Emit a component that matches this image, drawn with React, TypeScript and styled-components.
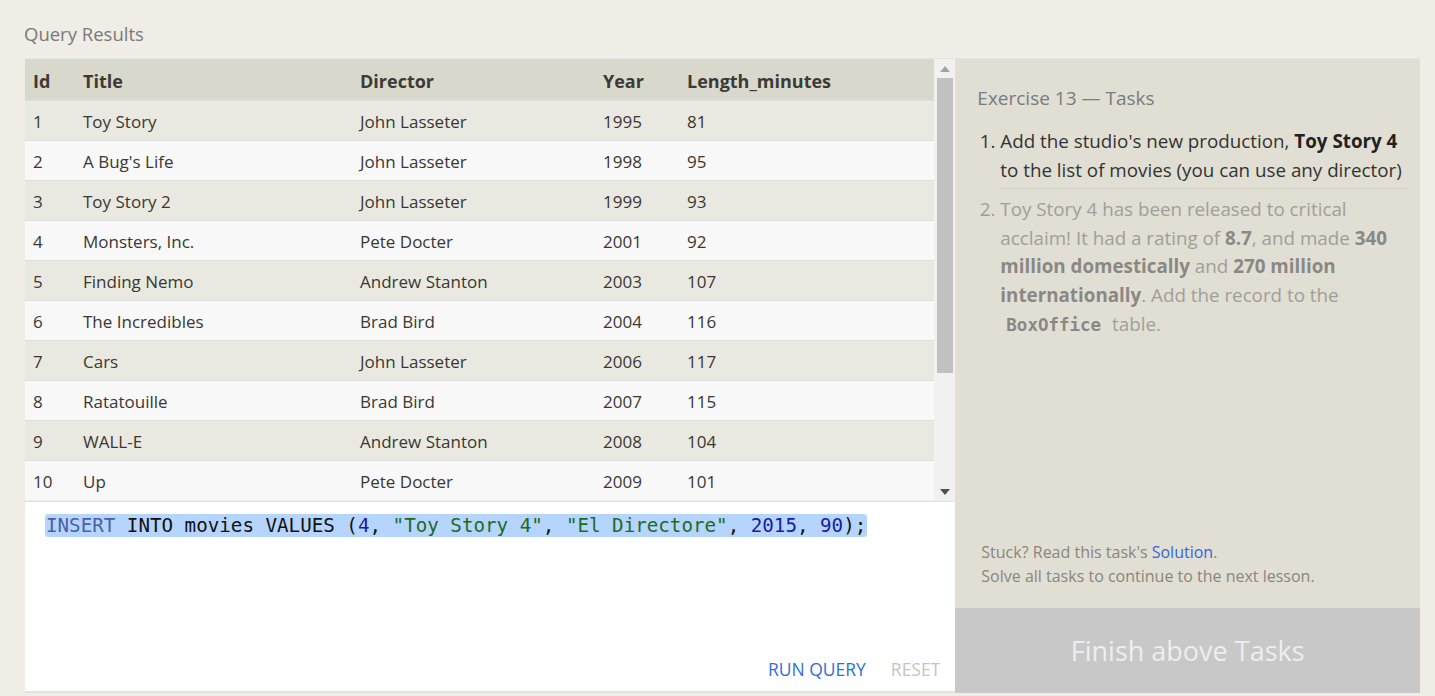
import React from "react";
import styled, { createGlobalStyle } from "styled-components";

const Global = createGlobalStyle`
  html, body { margin: 0; padding: 0; background: #efede5; }
  body { font-family: "Open Sans", "Noto Sans", sans-serif; }
  * { box-sizing: border-box; }
`;

const Page = styled.div`
  width: 1435px;
  height: 696px;
  padding: 22px 15px 0 24px;
  display: flex;
  flex-direction: column;
  overflow: hidden;
`;

const Heading = styled.div`
  font-size: 18.5px;
  color: #7a7a7a;
  line-height: 24px;
  height: 36px;
`;

const Main = styled.div`
  display: flex;
  height: 635px;
`;

const LeftCol = styled.div`
  width: 931px;
  margin-left: 1px;
  display: flex;
  flex-direction: column;
  border-top: 1px solid #e6e4dc;
`;

const TableArea = styled.div`
  height: 443px;
  display: flex;
  border-bottom: 1px solid #e0e0e0;
`;

const TableWrap = styled.div`
  flex: 1;
  overflow: hidden;
`;

const Table = styled.table`
  width: 100%;
  border-collapse: collapse;
  color: #333;
`;

const Th = styled.th<{ $w?: number }>`
  text-align: left;
  font-weight: 700;
  font-size: 18px;
  color: #3d3a36;
  background: #d9d8cc;
  height: 41px;
  padding: 3px 0 0 8px;
  width: ${(p) => (p.$w ? `${p.$w}px` : "auto")};
`;

const Tr = styled.tr<{ $odd: boolean }>`
  background: ${(p) => (p.$odd ? "#eae9e1" : "#f8f8f8")};
  border-top: 1px solid #dedede;
`;

const Td = styled.td`
  font-size: 17px;
  height: 40px;
  padding: 2px 0 0 8px;
  color: #3a3733;
`;

const Scrollbar = styled.div`
  width: 21px;
  background: #f1f1f1;
  display: flex;
  flex-direction: column;
  align-items: center;
`;

const ArrowBox = styled.div`
  height: 19px;
  width: 100%;
  display: flex;
  align-items: center;
  justify-content: center;
`;

const Thumb = styled.div`
  width: 16px;
  height: 295px;
  background: #c1c1c1;
`;

const TrackFill = styled.div`
  flex: 1;
`;

const Editor = styled.div`
  flex: 1;
  background: #ffffff;
  display: flex;
  flex-direction: column;
  padding: 13px 15px 10px 20px;
  border-bottom: 2px solid #e4e2da;
`;

const Code = styled.div`
  font-family: "DejaVu Sans Mono", "Liberation Mono", monospace;
  font-size: 19.2px;
  line-height: 22px;
  white-space: pre;
  flex: 1;
`;

const Sel = styled.span`
  background: #b5d5ff;
  border-radius: 3px;
  padding: 0 1px;
  color: #111;
`;

const Kw = styled.span`
  color: #4a5fa5;
`;
const Num = styled.span`
  color: #1a1aa6;
`;
const Str = styled.span`
  color: #1d6b1d;
`;

const Actions = styled.div`
  display: flex;
  justify-content: flex-end;
  gap: 25px;
  font-size: 17.5px;
  padding-top: 2px;
`;

const ActionBtn = styled.span<{ $muted?: boolean }>`
  color: ${(p) => (p.$muted ? "#c4c4c4" : "#2f6fd8")};
`;

const Right = styled.div`
  width: 465px;
  background: #e1dfd4;
  display: flex;
  flex-direction: column;
  border-top: 1px solid #e6e4dc;
`;

const TaskBody = styled.div`
  flex: 1;
  padding: 26px 12px 0 22px;
  display: flex;
  flex-direction: column;
`;

const TaskTitle = styled.div`
  font-size: 19px;
  color: #777b82;
  line-height: 26px;
  margin-bottom: 16px;
`;

const List = styled.ol`
  margin: 0;
  padding: 0 0 0 23px;
  font-size: 18.8px;
  line-height: 28.6px;
`;

const Item = styled.li<{ $done?: boolean }>`
  color: ${(p) => (p.$done ? "#333" : "#a09e98")};
  padding-bottom: ${(p) => (p.$done ? "4px" : "0")};
  margin-bottom: ${(p) => (p.$done ? "6px" : "0")};
  border-bottom: ${(p) => (p.$done ? "1px solid #d2d0c6" : "none")};
  & b {
    color: ${(p) => (p.$done ? "#222" : "#8a8884")};
  }
`;

const Mono = styled.code`
  font-family: "DejaVu Sans Mono", "Liberation Mono", monospace;
  font-weight: 700;
  font-size: 17.5px;
  color: #8a8884;
  padding: 0 6px;
`;

const Stuck = styled.div`
  margin-top: auto;
  padding: 0 0 20px 4px;
  font-size: 16px;
  line-height: 24px;
  color: #8a857d;
  & a {
    color: #3366e0;
    text-decoration: none;
  }
`;

const Finish = styled.div`
  height: 85px;
  background: #c8c8c8;
  color: #eeeeee;
  font-size: 27px;
  display: flex;
  align-items: center;
  justify-content: center;
`;

const rows: [number, string, string, number, number][] = [
  [1, "Toy Story", "John Lasseter", 1995, 81],
  [2, "A Bug's Life", "John Lasseter", 1998, 95],
  [3, "Toy Story 2", "John Lasseter", 1999, 93],
  [4, "Monsters, Inc.", "Pete Docter", 2001, 92],
  [5, "Finding Nemo", "Andrew Stanton", 2003, 107],
  [6, "The Incredibles", "Brad Bird", 2004, 116],
  [7, "Cars", "John Lasseter", 2006, 117],
  [8, "Ratatouille", "Brad Bird", 2007, 115],
  [9, "WALL-E", "Andrew Stanton", 2008, 104],
  [10, "Up", "Pete Docter", 2009, 101],
];

export default function App() {
  return (
    <>
      <Global />
      <Page>
        <Heading>Query Results</Heading>
        <Main>
          <LeftCol>
            <TableArea>
              <TableWrap>
                <Table>
                  <thead>
                    <tr>
                      <Th $w={50}>Id</Th>
                      <Th $w={277}>Title</Th>
                      <Th $w={243}>Director</Th>
                      <Th $w={84}>Year</Th>
                      <Th>Length_minutes</Th>
                    </tr>
                  </thead>
                  <tbody>
                    {rows.map((r, i) => (
                      <Tr key={r[0]} $odd={i % 2 === 0}>
                        <Td>{r[0]}</Td>
                        <Td>{r[1]}</Td>
                        <Td>{r[2]}</Td>
                        <Td>{r[3]}</Td>
                        <Td>{r[4]}</Td>
                      </Tr>
                    ))}
                  </tbody>
                </Table>
              </TableWrap>
              <Scrollbar>
                <ArrowBox>
                  <svg width="10" height="6" viewBox="0 0 10 6">
                    <path d="M5 0 L10 6 L0 6 Z" fill="#a3a3a3" />
                  </svg>
                </ArrowBox>
                <Thumb />
                <TrackFill />
                <ArrowBox>
                  <svg width="10" height="6" viewBox="0 0 10 6">
                    <path d="M0 0 L10 0 L5 6 Z" fill="#505050" />
                  </svg>
                </ArrowBox>
              </Scrollbar>
            </TableArea>
            <Editor>
              <Code>
                <Sel>
                  <Kw>INSERT</Kw> INTO movies VALUES (<Num>4</Num>, <Str>"Toy Story 4"</Str>,{" "}
                  <Str>"El Directore"</Str>, <Num>2015</Num>, <Num>90</Num>);
                </Sel>
              </Code>
              <Actions>
                <ActionBtn>RUN QUERY</ActionBtn>
                <ActionBtn $muted>RESET</ActionBtn>
              </Actions>
            </Editor>
          </LeftCol>
          <Right>
            <TaskBody>
              <TaskTitle>Exercise 13 — Tasks</TaskTitle>
              <List>
                <Item $done>
                  Add the studio's new production, <b>Toy Story 4</b> to the list of movies (you can
                  use any director)
                </Item>
                <Item>
                  Toy Story 4 has been released to critical acclaim! It had a rating of <b>8.7</b>,
                  and made <b>340 million domestically</b> and <b>270 million internationally</b>.
                  Add the record to the <Mono>BoxOffice</Mono> table.
                </Item>
              </List>
              <Stuck>
                Stuck? Read this task's <a href="#">Solution</a>.
                <br />
                Solve all tasks to continue to the next lesson.
              </Stuck>
            </TaskBody>
            <Finish>Finish above Tasks</Finish>
          </Right>
        </Main>
      </Page>
    </>
  );
}
